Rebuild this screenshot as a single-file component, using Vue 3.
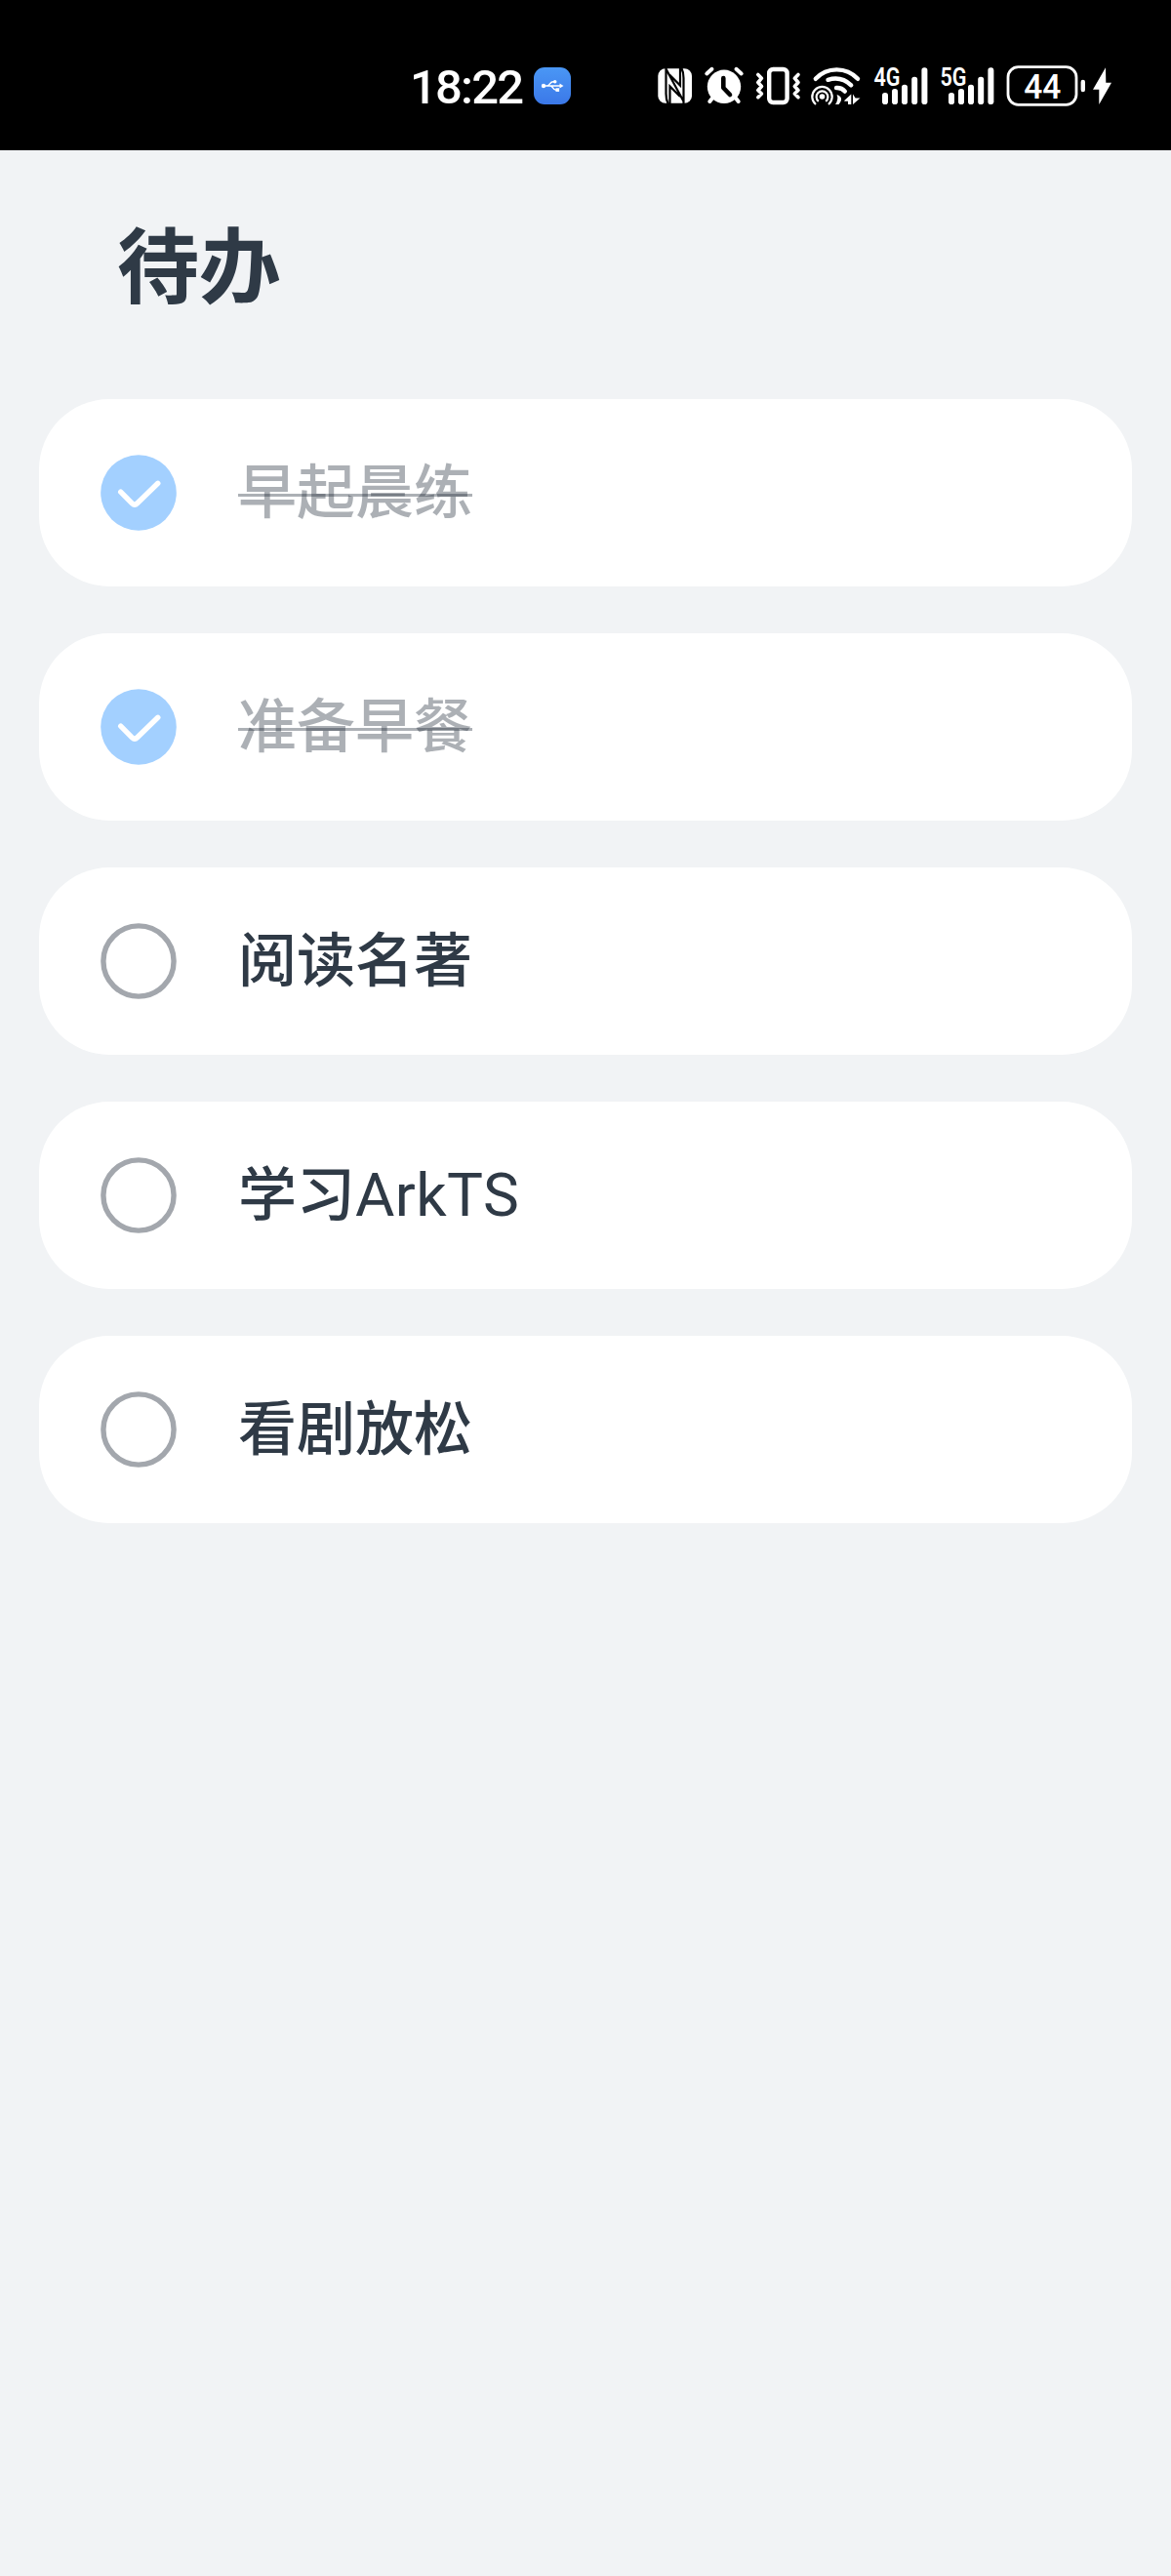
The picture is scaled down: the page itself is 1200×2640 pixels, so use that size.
<script setup>
import { ref } from 'vue'

const todos = ref([
  { name: '早起晨练', done: true },
  { name: '准备早餐', done: true },
  { name: '阅读名著', done: false },
  { name: '学习', latin: 'ArkTS', done: false },
  { name: '看剧放松', done: false },
])

const networks = ['4G', '5G']
const bars = [
  { x: 9, y: 29 },
  { x: 19, y: 25 },
  { x: 29, y: 20.7 },
  { x: 39.2, y: 12.7 },
  { x: 49.4, y: 3.3 },
]
</script>

<template>
  <div class="screen">
    <header class="status">
      <span class="clock">18:22</span>
      <svg class="usb" width="38" height="44" viewBox="0 0 38 44">
        <defs>
          <linearGradient id="usbFill" x1="0" y1="0" x2="0" y2="1">
            <stop offset="0" stop-color="#4a97f5" />
            <stop offset="1" stop-color="#3b78e8" />
          </linearGradient>
        </defs>
        <rect x="0" y="3" width="38" height="38" rx="11" fill="url(#usbFill)" />
        <g stroke="#fff" stroke-width="1.4" fill="none">
          <path d="M10 22H28M13 22C17 22 16 17.7 20 17.7H22M17 22C20 22 19 26.3 23 26.3H24" />
        </g>
        <g fill="#fff">
          <circle cx="10" cy="22" r="2.2" />
          <circle cx="21.7" cy="17.7" r="1.8" />
          <rect x="22.5" y="24.3" width="3.6" height="3.6" />
          <path d="M26.5 19.5L30.5 22L26.5 24.5Z" />
        </g>
      </svg>
      <svg class="nfc" width="36" height="44" viewBox="0 0 36 44">
        <rect x="0.3" y="4.3" width="34.7" height="35.4" rx="7.5" fill="#fff" />
        <path d="M8.5 4V30Q8.5 36 10.5 40M26.5 40V14Q26.5 8 24.5 4M8.7 5L26.3 37.5M12.5 40V22.5L23 33M23 4V21.5L12 10.5" fill="none" stroke="#000" stroke-width="2.2" />
      </svg>
      <svg class="alarm" width="40" height="44" viewBox="0 0 40 44">
        <g stroke="#fff" stroke-linecap="round" fill="none" stroke-width="4">
          <path d="M2.3 9.5L7.5 4.8M32.5 4.8L37.7 9.5" />
          <path d="M8.5 34L5.3 38M31.5 34L34.7 38" />
        </g>
        <circle cx="20" cy="22.8" r="17.2" fill="#fff" />
        <path d="M19.3 14V24L26 31" fill="none" stroke="#000" stroke-width="4.6" stroke-linecap="round" stroke-linejoin="round" />
      </svg>
      <svg class="vibrate" width="48" height="44" viewBox="0 0 48 44">
        <g fill="none" stroke="#fff" stroke-linecap="round" stroke-linejoin="round">
          <rect x="14.2" y="5" width="18.4" height="34" rx="4" stroke-width="4.4" />
          <path d="M2.8 10.5L6.5 14.2L2.8 18.5L6.5 22.5L2.8 26.5L6.5 30L2.8 33.7M44 10.5L40.3 14.2L44 18.5L40.3 22.5L44 26.5L40.3 30L44 33.7" stroke-width="3.6" />
        </g>
      </svg>
      <svg class="wifi" width="52" height="44" viewBox="0 0 52 44">
        <g fill="none" stroke="#fff" stroke-width="4.4" stroke-linecap="round">
          <path d="M4.8 14.8Q13.5 5.4 26.4 5.4Q39.2 5.4 48 14.8" />
          <path d="M17.5 15.8Q31 11.6 41.2 21.3" />
          <path d="M26 24Q31.5 23.6 34.8 27.6" />
        </g>
        <circle cx="11.5" cy="32.7" r="13" fill="#000" />
        <g fill="none" stroke="#fff" stroke-width="2.2">
          <path d="M5 41A10.2 10.2 0 1 1 18 41" />
          <path d="M7.8 37.8A5.9 5.9 0 1 1 15.2 37.8" />
        </g>
        <circle cx="11.5" cy="33" r="2.8" fill="#fff" />
        <path d="M26.6 31Q34.5 34 28.5 41H25Q28.5 36 26.6 31ZM34.3 37L41.3 30.5V41H38V37.8H34.3ZM43 30.5L45.6 34.5H50.5L43 41Z" fill="#fff" />
      </svg>
      <svg v-for="net in networks" :key="net" class="signal" width="56" height="44" viewBox="0 0 56 44">
        <text x="0.5" y="21.7" textLength="27" lengthAdjust="spacingAndGlyphs" class="net">{{ net }}</text>
        <rect v-for="bar in bars" :key="bar.x" :x="bar.x" :y="bar.y" width="6" :height="41 - bar.y" rx="2.8" fill="#fff" />
      </svg>
      <svg class="battery" width="82" height="44" viewBox="0 0 82 44">
        <rect x="2" y="2.7" width="70" height="38.6" rx="10.5" fill="none" stroke="#fff" stroke-width="2.8" />
        <text x="18.3" y="34.8" textLength="38" lengthAdjust="spacingAndGlyphs" class="level">44</text>
        <rect x="76.6" y="15.7" width="4.4" height="12.6" rx="2.2" fill="#fff" />
      </svg>
      <svg class="bolt" width="22" height="44" viewBox="0 0 22 44">
        <path d="M14 3.3L1 25.7H7.3V41L20 18.7H14.3Z" fill="#fff" />
      </svg>
    </header>

    <main class="page">
      <h1 class="title">待办</h1>
      <ul class="list">
        <li
          v-for="todo in todos"
          :key="todo.name"
          class="item"
          :class="{ done: todo.done }"
          @click="todo.done = !todo.done"
        >
          <svg class="check" width="78" height="78" viewBox="0 0 78 78">
            <template v-if="todo.done">
              <circle cx="39" cy="39" r="38.8" fill="#a3d0ff" />
              <path d="M20.7 38.2L32.3 49.8Q35 52.4 37.7 49.8L58.8 29.3" fill="none" stroke="#fff" stroke-width="5.4" stroke-linecap="round" />
            </template>
            <circle v-else cx="39" cy="39" r="36.1" fill="none" stroke="#a3a7ad" stroke-width="5.4" />
          </svg>
          <span class="name">{{ todo.name }}<span v-if="todo.latin" class="latin">{{ todo.latin }}</span></span>
        </li>
      </ul>
    </main>
  </div>
</template>

<style>
body {
  margin: 0;
  background: #f1f3f5;
}
</style>

<style scoped>
.screen {
  width: 1200px;
  min-height: 2640px;
  background: #f1f3f5;
  font-family: "Noto Sans CJK SC", sans-serif;
}

.status {
  display: flex;
  box-sizing: border-box;
  height: 154px;
  padding: 66px 0 0 420px;
  background: #000;
  color: #fff;
}

.status svg {
  flex: none;
  overflow: visible;
}

.clock {
  width: 127px;
  height: 44px;
  font-family: Roboto, sans-serif;
  font-size: 49px;
  font-weight: 500;
  line-height: 47px;
  letter-spacing: -1.8px;
  white-space: nowrap;
}

.nfc { margin-left: 89px; }
.alarm { margin-left: 12px; }
.vibrate { margin-left: 12px; }
.wifi { margin-left: 9px; }
.signal { margin-left: 12px; }
.battery { margin-left: 12px; }
.bolt { margin-left: 6px; }

.net {
  fill: #fff;
  font-family: Roboto, sans-serif;
  font-size: 26px;
  font-weight: 600;
}

.level {
  fill: #fff;
  font-family: Roboto, sans-serif;
  font-size: 35px;
  font-weight: 500;
}

.title {
  height: 255px;
  margin: 0;
  padding-left: 120px;
  box-sizing: border-box;
  color: #2f3a46;
  font-size: 84px;
  font-weight: 700;
  line-height: 228px;
}

.list {
  display: flex;
  flex-direction: column;
  gap: 48px;
  margin: 0;
  padding: 0 40px;
  list-style: none;
}

.item {
  display: flex;
  align-items: center;
  gap: 63px;
  box-sizing: border-box;
  height: 192px;
  padding: 0 63px;
  border-radius: 72px;
  background: #fff;
}

.check {
  flex: none;
}

.name {
  position: relative;
  padding-bottom: 10px;
  color: #2f3a46;
  font-size: 60px;
  font-weight: 500;
  line-height: 80px;
}

.latin {
  font-family: Roboto, sans-serif;
  font-size: 62px;
  font-weight: 400;
  letter-spacing: 0.4px;
  line-height: 1;
}

.done .name {
  color: rgba(24, 36, 49, 0.36);
}

.done .name::after {
  content: "";
  position: absolute;
  left: 0;
  right: 0;
  top: 46px;
  height: 3px;
  background: rgba(24, 36, 49, 0.36);
}
</style>
